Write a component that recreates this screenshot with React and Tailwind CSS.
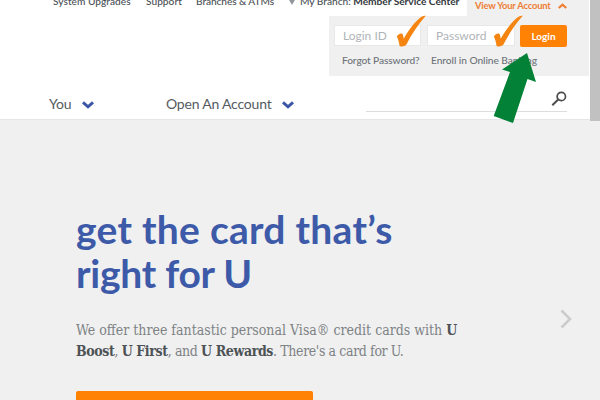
import clsx from "clsx"

function Chevron({ className }) {
  return (
    <svg viewBox="0 0 12 8" className={clsx("w-3 h-2", className)} fill="none" stroke="currentColor">
      <path d="M1 1.3 L6 5.8 L11 1.3" strokeWidth="2.9" />
    </svg>
  )
}

function Check({ className }) {
  return (
    <svg viewBox="0 0 30 33" className={clsx("absolute w-[30px] h-[33px]", className)} fill="#f58410">
      <path d="M0.8 21.5 C2.2 19 4.5 18 6.2 18.6 C7.2 20 7.4 22 7.7 23.8 C13 14.5 19.5 6 25.5 1.8 C27 1 28.5 0.8 29.8 0.8 C22 9.5 15.5 19.5 10.3 29.8 C8.5 31.5 5.5 32 3.6 31 C3 27 2.2 24 0.8 21.5 Z" />
    </svg>
  )
}

function TopLinks() {
  return (
    <div className="absolute left-0 -top-[7px] h-4 leading-4 flex pl-[53px] text-[10.2px] font-medium text-[#4a5055] whitespace-nowrap">
      <span className="w-[93px]">System Upgrades</span>
      <span className="w-[50px]">Support</span>
      <span className="w-[93px] tracking-[-0.1px]">Branches &amp; ATMs</span>
      <svg viewBox="0 0 6 9" className="w-[6px] h-[9px] mt-[3px] mr-[5px]" fill="#92969b">
        <path d="M3 9 L0.4 4.5 A3 3 0 1 1 5.6 4.5 Z" />
      </svg>
      <span className="tracking-[-0.04px]">
        My Branch: <b className="text-[#33383c]">Member Service Center</b>
      </span>
    </div>
  )
}

function LoginPanel() {
  return (
    <div className="ml-auto w-[260px] text-[10px]">
      <div className="ml-auto w-[122px] h-4 bg-[#f0f0f0] flex items-center pl-2 pb-[4px] text-[9.4px] font-bold text-[#ee7d35]">
        <span className="w-[83px] tracking-[-0.18px] whitespace-nowrap">View Your Account</span>
        <Chevron className="rotate-180 w-[9px] h-[6px]" />
      </div>
      <div className="h-[60px] bg-[#f0f0f0] pt-[9px] pl-[5px]">
        <div className="flex text-[12px] text-[#b0b5b8]">
          <div className="w-[87px] h-[21px] mr-[6px] bg-white border border-[#e8e8e8] pl-2 leading-5">Login ID</div>
          <div className="w-[88px] h-[21px] mr-[5px] bg-white border border-[#e8e8e8] pl-2 leading-5">Password</div>
          <button className="w-[47px] h-[22px] rounded-[2px] bg-[#ff8205] text-white text-[10px] font-bold">Login</button>
        </div>
        <div className="flex mt-[5px] pl-2 text-[10.2px] font-medium leading-4 text-[#6d7378] whitespace-nowrap">
          <span className="w-[89px] tracking-[-0.12px]">Forgot Password?</span>
          <span className="tracking-[-0.06px]">Enroll in Online Banking</span>
        </div>
      </div>
    </div>
  )
}

function Nav() {
  return (
    <nav className="flex h-[43px] pl-[49px] text-[14px] leading-5 text-[#555b60] whitespace-nowrap">
      <div className="flex w-[117px] pt-[18px]">
        <span className="w-[33px] tracking-[-0.2px]">You</span>
        <Chevron className="mt-[7px] text-[#3c55a5]" />
      </div>
      <div className="flex pt-[18px] w-[200px]">
        <span className="w-[116px] tracking-[-0.2px]">Open An Account</span>
        <Chevron className="mt-[7px] text-[#3c55a5]" />
      </div>
      <div className="w-[201px] h-9 border-b border-[#dddddd] flex justify-end pt-[15px]">
        <svg viewBox="0 0 16 16" className="w-4 h-4" fill="none" stroke="#4c4c4c">
          <circle cx="10.3" cy="5.5" r="4.2" strokeWidth="1.7" />
          <path d="M7.2 8.6 L1.3 14.2" strokeWidth="2" />
        </svg>
      </div>
    </nav>
  )
}

export default function App() {
  return (
    <div className="relative w-[600px] h-[400px] overflow-hidden bg-[#f0f0f0] font-['Lato',sans-serif]">
      <header className="relative h-[120px] bg-white border-b border-[#e6e6e6] flex flex-col pr-[11px]">
        <TopLinks />
        <LoginPanel />
        <Nav />
        <div className="absolute right-0 top-0 w-[10px] h-[121px] bg-[#c1c1c1]" />
        <Check className="left-[396px] top-[15px]" />
        <Check className="left-[493px] top-[15px]" />
        <svg viewBox="0 0 44 72" className="absolute left-[493px] top-[52px] w-[44px] h-[72px]" fill="#038237">
          <path d="M34 1 L43 30 L34.5 27 L20 71 L0.7 64 L17 20 L9 17.5 Z" />
        </svg>
      </header>
      <main className="relative pl-[76px] pt-[87px]">
        <h1 className="h-[88px] text-[39px] leading-[44px] font-bold text-[#3d5aa9] whitespace-nowrap">
          <span className="tracking-[0.28px]">get the card that’s</span>
          <br />
          <span className="tracking-[-0.25px]">right for U</span>
        </h1>
        <p className="mt-[25px] h-[71px] text-[14px] leading-[21px] font-['Roboto_Slab','DejaVu_Serif_Condensed','DejaVu_Serif',serif] [font-stretch:condensed] text-[#7d8285] whitespace-nowrap">
          We offer three fantastic personal Visa® credit cards with <b className="text-[#4d5256]">U</b>
          <br />
          <span className="tracking-[-0.38px]">
            <b className="text-[#4d5256]">Boost</b>, <b className="text-[#4d5256]">U First</b>, and{" "}
            <b className="text-[#4d5256]">U Rewards</b>. There's a card for U.
          </span>
        </p>
        <div className="w-[237px] h-10 rounded-[2px] bg-[#ff8205]" />
        <svg viewBox="0 0 12 20" className="absolute left-[560px] top-[189px] w-3 h-5" fill="none" stroke="#cccccc">
          <path d="M1.5 1.5 L10 10 L1.5 18.5" strokeWidth="2.6" />
        </svg>
      </main>
    </div>
  )
}
